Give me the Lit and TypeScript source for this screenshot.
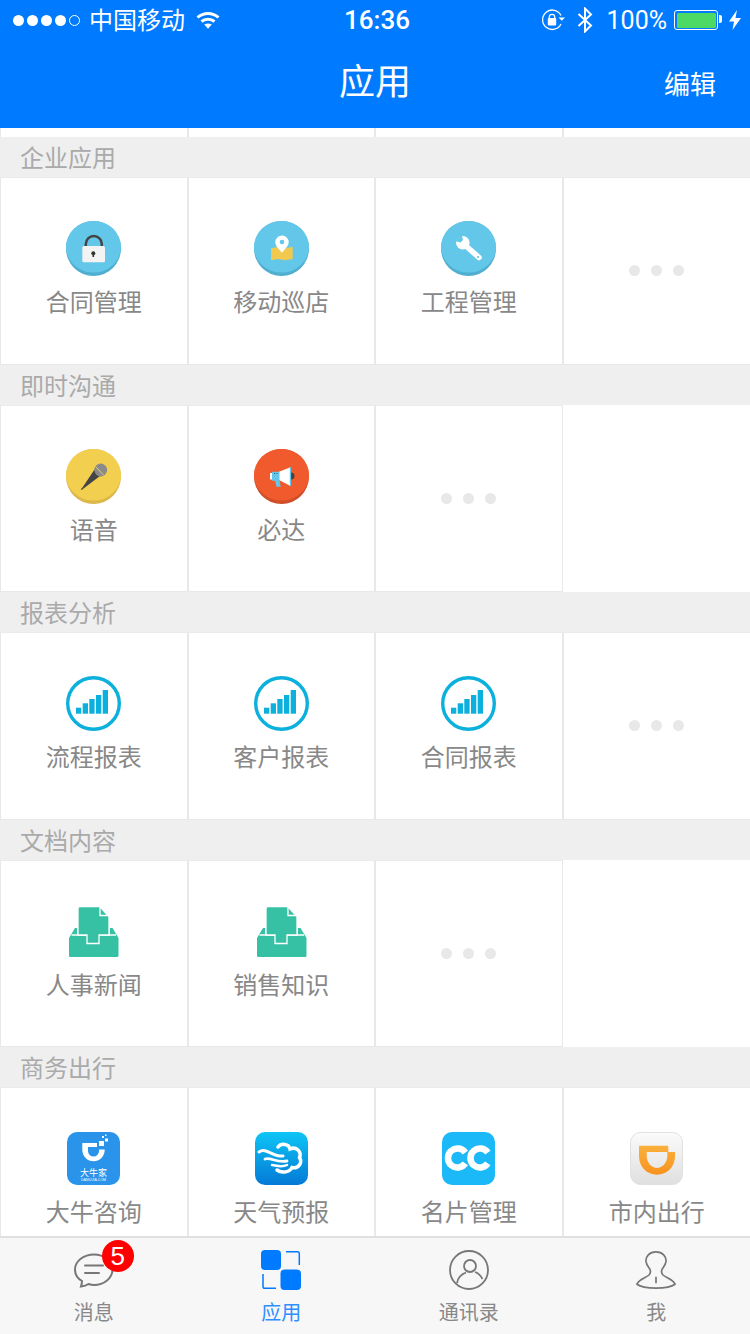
import { css, html, LitElement, svg } from "lit";
import { customElement } from "lit/decorators.js";

const disc = (top: string, bottom: string, inner: unknown) => html`
  <svg class="icon" viewBox="0 0 55 55">
    <circle cx="27.5" cy="27.5" r="27.5" fill=${bottom}></circle>
    <ellipse cx="27.5" cy="25.8" rx="27.5" ry="25.8" fill=${top}></ellipse>
    ${inner}
  </svg>
`;

const chart = html`
  <svg class="icon" viewBox="0 0 55 55">
    <circle cx="27.5" cy="27.5" r="25.8" fill="none" stroke="#0bb0dd" stroke-width="3.4"></circle>
    <g fill="#0bb0dd">
      <rect x="10" y="31.7" width="5.3" height="6"></rect>
      <rect x="16.7" y="27.3" width="5.3" height="10.4"></rect>
      <rect x="23.3" y="23" width="5.3" height="14.7"></rect>
      <rect x="30" y="19" width="5.3" height="18.7"></rect>
      <rect x="36.7" y="14" width="5.3" height="23.7"></rect>
    </g>
  </svg>
`;

const inbox = html`
  <svg class="icon" viewBox="0 0 55 55">
    <path d="M9 24H46.5L52.5 34V51.5Q52.5 53 51 53H4.5Q3 53 3 51.5V34Z" fill="#36c1a4"></path>
    <path d="M5.5 31H50" stroke="#fff" stroke-width="1.5"></path>
    <path d="M11 24H44V31H11Z" fill="#fff"></path>
    <path
      d="M14 2.7H34L43 12.5V31H33V39.5H21V31H12V4.7Q12 2.7 14 2.7Z"
      fill="#36c1a4"
      stroke="#fff"
      stroke-width="1.3"
    ></path>
    <path d="M34 3V11.5H42.5" fill="none" stroke="#fff" stroke-width="1.3"></path>
  </svg>
`;

const icons: Record<string, unknown> = {
  lock: disc(
    "#63c7ea",
    "#50afd0",
    svg`
      <path d="M19.8 26V23A8 8 0 0 1 35.8 23V26" fill="none" stroke="#444" stroke-width="2.5"></path>
      <rect x="16.3" y="25" width="22.7" height="16.3" rx="1.5" fill="#f3f3f3"></rect>
      <circle cx="27.3" cy="32.3" r="2" fill="#333"></circle>
      <rect x="26.5" y="32.5" width="1.6" height="3.5" fill="#333"></rect>
    `
  ),
  map: disc(
    "#63c7ea",
    "#50afd0",
    svg`
      <path d="M17 27.5L24 25.7L31 27.5L38.7 25.7V38L31 39.3L24 38L17 39.3Z" fill="#f0c94e"></path>
      <path d="M28 31.7C24.5 27.5 21.3 24.8 21.3 21.3A6.7 6.7 0 0 1 34.7 21.3C34.7 24.8 31.5 27.5 28 31.7Z" fill="#fff"></path>
      <circle cx="28" cy="21" r="2.3" fill="#63c7ea"></circle>
    `
  ),
  wrench: disc(
    "#63c7ea",
    "#50afd0",
    svg`
      <path d="M25 25L38 36.5" stroke="#fff" stroke-width="5.5" stroke-linecap="round"></path>
      <circle cx="21.8" cy="21.8" r="6.8" fill="#fff"></circle>
      <path d="M14 20L19.5 21.5L22 19L20.5 13Z" fill="#63c7ea"></path>
      <circle cx="37" cy="36" r="1.1" fill="#63c7ea"></circle>
    `
  ),
  mic: disc(
    "#f2cf4e",
    "#dcb84a",
    svg`
      <path d="M28.5 20.5L34 27L17.5 39.5L15.7 41L14.8 40.2L16.5 38.5Z" fill="#444"></path>
      <circle cx="34.7" cy="21" r="6.4" fill="#8a8a8a"></circle>
      <path d="M29.5 17.5L37.5 26" stroke="#e7cf6a" stroke-width="1"></path>
    `
  ),
  horn: disc(
    "#f15a2c",
    "#d04e2a",
    svg`
      <circle cx="37" cy="27" r="3.5" fill="#444"></circle>
      <path d="M25 22.7L36.5 18.3V37L25 31Z" fill="#fff"></path>
      <rect x="35.8" y="18" width="1.3" height="19" fill="#63c7ea"></rect>
      <rect x="16" y="24" width="3" height="6.5" fill="#fff"></rect>
      <path d="M18 22.7H25.5V31.5L26.7 37.7H22.5L21 31.7H18Z" fill="#63c7ea"></path>
      <circle cx="20.5" cy="24.5" r=".5" fill="#333"></circle>
      <circle cx="23" cy="24.5" r=".5" fill="#333"></circle>
    `
  ),
  chart,
  inbox,
  daniu: html`
    <svg class="icon square" viewBox="0 0 53 53">
      <rect width="53" height="53" rx="10" fill="#2a93ea"></rect>
      <path
        d="M15.3 11H30V15H21V19A5.5 5.5 0 0 0 32 19V17.5H37.7V18A11.2 11.2 0 0 1 15.3 18Z"
        fill="#fff"
      ></path>
      <g fill="#fff">
        <rect x="32" y="9" width="5" height="5"></rect>
        <rect x="38" y="6.5" width="3" height="3"></rect>
        <rect x="35" y="4" width="2" height="2"></rect>
        <rect x="38" y="2.5" width="1.5" height="1.5"></rect>
      </g>
      <text class="daniu-cn" x="26.5" y="44">大牛家</text>
      <text class="daniu-en" x="26.5" y="49">DANIUJIA.COM</text>
    </svg>
  `,
  weather: html`
    <svg class="icon square" viewBox="0 0 53 53">
      <defs>
        <linearGradient id="sky" x1="0" y1="0" x2="0" y2="1">
          <stop offset="0" stop-color="#0ec5f5"></stop>
          <stop offset="1" stop-color="#0479d6"></stop>
        </linearGradient>
      </defs>
      <rect width="53" height="53" rx="10" fill="url(#sky)"></rect>
      <g fill="none" stroke="#fff" stroke-linecap="round">
        <path
          d="M23 15C26 11 34 11.5 35 17C41 14 47 20 44.5 25.5C48 31 43 37 37 35.5C34 41 26 41 22 38"
          stroke-width="3.5"
        ></path>
        <path d="M4 20C11 15 18 25 28 24" stroke-width="3"></path>
        <path d="M10 27C16 25 21 31 32 29" stroke-width="2.8"></path>
        <path d="M17 33C20 33 26 36 32 33" stroke-width="2.5"></path>
      </g>
    </svg>
  `,
  cc: html`
    <svg class="icon square" viewBox="0 0 53 53">
      <rect width="53" height="53" rx="10" fill="#1cb9f8"></rect>
      <g fill="none" stroke="#fff" stroke-width="6.5">
        <path d="M23.3 20.6A9.5 9.5 0 1 0 23.3 31.4"></path>
        <path d="M45.8 20.6A9.5 9.5 0 1 0 45.8 31.4"></path>
      </g>
    </svg>
  `,
  didi: html`
    <svg class="icon square" viewBox="0 0 53 53">
      <defs>
        <linearGradient id="didi-bg" x1="0" y1="0" x2="0" y2="1">
          <stop offset="0" stop-color="#fbfbfb"></stop>
          <stop offset="1" stop-color="#dfdfdf"></stop>
        </linearGradient>
        <linearGradient id="didi-fg" x1="0" y1="0" x2="0" y2="1">
          <stop offset="0" stop-color="#fbb03b"></stop>
          <stop offset="1" stop-color="#f7931e"></stop>
        </linearGradient>
      </defs>
      <rect x=".5" y=".5" width="52" height="52" rx="10" fill="url(#didi-bg)" stroke="#e0e0e0"></rect>
      <path
        fill="url(#didi-fg)"
        fill-rule="evenodd"
        d="M9 13.7H38.3V20H45V24C45 35 37 42.7 27 42.7C17 42.7 9 35 9 24ZM16.7 20V24C16.7 31 22 36 27 36C32 36 37.3 31 37.3 24V20Z"
      ></path>
    </svg>
  `,
};

const tabIcons: Record<string, unknown> = {
  chat: html`
    <svg class="tab-icon" viewBox="0 0 40 40" fill="none" stroke="#777" stroke-width="2">
      <path d="M7 36.5C11 36 13 35 14.5 34C16 34.5 18 35 20 35C30 35 38.5 28 38.5 19.5C38.5 11 30 4.5 20 4.5C10 4.5 1 11 1 19.5C1 24.5 3.5 28.5 8 31C8 33 7.5 35 7 36.5Z"></path>
      <path d="M11 15.5H29M11 23H25" stroke-linecap="round"></path>
    </svg>
  `,
  apps: html`
    <svg class="tab-icon" viewBox="0 0 40 40">
      <rect x="0" y="0" width="20" height="20" rx="4" fill="#007aff"></rect>
      <rect x="19.5" y="19.5" width="20.5" height="20.5" rx="4" fill="#007aff"></rect>
      <path d="M25 1.7H36.5Q38.3 1.7 38.3 3.5V15" fill="none" stroke="#007aff" stroke-width="1.5"></path>
      <path d="M2 24V36.5Q2 38.3 3.8 38.3H15" fill="none" stroke="#007aff" stroke-width="1.5"></path>
    </svg>
  `,
  contacts: html`
    <svg class="tab-icon" viewBox="0 0 40 40" fill="none" stroke="#777" stroke-width="1.8">
      <circle cx="20" cy="20" r="19"></circle>
      <circle cx="21" cy="16" r="6"></circle>
      <path d="M8 33C9 27 13 24 17 22.5M26 22C29 23 32 26 33.5 29"></path>
    </svg>
  `,
  me: html`
    <svg class="tab-icon" viewBox="0 0 42 40" fill="none" stroke="#777" stroke-width="1.8">
      <path d="M21 1C14 1 10 6 10.5 11C11 15 13 17 14.5 19C15.5 21 15.5 23 14 25C11 28 2 30 1 35C5 38 13 39 21 39C29 39 37 38 41 35C40 30 31 28 28 25C26.5 23 26.5 21 27.5 19C29 17 31 15 31.5 11C32 6 28 1 21 1Z"></path>
      <path d="M21 27V34"></path>
    </svg>
  `,
};

interface App {
  name: string;
  icon: string;
}

interface Section {
  title: string;
  apps: App[];
}

const sections: Section[] = [
  {
    title: "企业应用",
    apps: [
      { name: "合同管理", icon: "lock" },
      { name: "移动巡店", icon: "map" },
      { name: "工程管理", icon: "wrench" },
    ],
  },
  {
    title: "即时沟通",
    apps: [
      { name: "语音", icon: "mic" },
      { name: "必达", icon: "horn" },
    ],
  },
  {
    title: "报表分析",
    apps: [
      { name: "流程报表", icon: "chart" },
      { name: "客户报表", icon: "chart" },
      { name: "合同报表", icon: "chart" },
    ],
  },
  {
    title: "文档内容",
    apps: [
      { name: "人事新闻", icon: "inbox" },
      { name: "销售知识", icon: "inbox" },
    ],
  },
  {
    title: "商务出行",
    apps: [
      { name: "大牛咨询", icon: "daniu" },
      { name: "天气预报", icon: "weather" },
      { name: "名片管理", icon: "cc" },
      { name: "市内出行", icon: "didi" },
    ],
  },
];

const tabs = [
  { name: "消息", icon: "chat", badge: "5" },
  { name: "应用", icon: "apps", active: true },
  { name: "通讯录", icon: "contacts" },
  { name: "我", icon: "me" },
];

@customElement("app-root")
class AppRoot extends LitElement {
  renderCells(apps: App[]) {
    const cells = apps.map(
      (app) => html`
        <div class="cell">
          ${icons[app.icon]}
          <span class="name">${app.name}</span>
        </div>
      `
    );
    if (apps.length < 4) {
      cells.push(html`
        <div class="cell more">
          <i></i><i></i><i></i>
        </div>
      `);
    }
    if (apps.length < 3) {
      cells.push(html`<div class="blank"></div>`);
    }
    return cells;
  }

  render() {
    return html`
      <header>
        <div class="status">
          <div class="carrier">
            <span class="dots"><i></i><i></i><i></i><i></i><i class="off"></i></span>
            <span class="carrier-name">中国移动</span>
            <svg class="wifi" viewBox="0 0 24 18" fill="none" stroke="#fff" stroke-width="3">
              <path d="M1.5 6.5C7.5 1 16.5 1 22.5 6.5"></path>
              <path d="M5.5 10.5C9 7.5 15 7.5 18.5 10.5"></path>
              <path d="M12 17.8L8.2 13.5C10.5 12.3 13.5 12.3 15.8 13.5Z" fill="#fff" stroke="none"></path>
            </svg>
          </div>
          <div class="time">16:36</div>
          <div class="indicators">
            <svg class="rotation" viewBox="0 0 24 22">
              <path d="M20 6.5A9.7 9.7 0 1 0 20 15" fill="none" stroke="#fff" stroke-width="1.3"></path>
              <path d="M17.5 8.5H24L20.8 11.8Z" fill="#fff"></path>
              <rect x="6.8" y="9" width="8.4" height="7.5" rx="1" fill="#fff"></rect>
              <path d="M8.3 10V8A2.7 2.7 0 0 1 13.7 8V10" fill="none" stroke="#fff" stroke-width="1.3"></path>
            </svg>
            <svg class="bluetooth" viewBox="0 0 16 26" fill="none" stroke="#fff" stroke-width="2">
              <path d="M1.5 7L14 18.5L8 24.5V1.5L14 7.5L1.5 19"></path>
            </svg>
            <span class="percent">100%</span>
            <span class="battery"><span></span></span>
            <svg class="bolt" viewBox="0 0 12 20"><path d="M8 0L0 11.5H5L3.5 20L12 8H6.5Z" fill="#fff"></path></svg>
          </div>
        </div>
        <nav>
          <span></span>
          <h1>应用</h1>
          <a>编辑</a>
        </nav>
      </header>
      <main>
        <div class="stub"><b></b><b></b><b></b><b></b></div>
        ${sections.map(
          (section) => html`
            <h2>${section.title}</h2>
            <div class="grid">${this.renderCells(section.apps)}</div>
          `
        )}
      </main>
      <footer>
        ${tabs.map(
          (tab) => html`
            <div class="tab ${tab.active ? "active" : ""}">
              <div class="tab-art">
                ${tabIcons[tab.icon]}
                ${tab.badge ? html`<span class="badge">${tab.badge}</span>` : ""}
              </div>
              <span>${tab.name}</span>
            </div>
          `
        )}
      </footer>
    `;
  }

  static styles = css`
    :host {
      display: flex;
      flex-direction: column;
      width: 750px;
      height: 1334px;
      overflow: hidden;
      background: #fff;
      font-family: "Noto Sans CJK SC", "Liberation Sans", sans-serif;
    }

    header {
      flex: none;
      height: 128px;
      background: #007aff;
      color: #fff;
    }

    .status {
      display: grid;
      grid-template-columns: 1fr auto 1fr;
      align-items: center;
      height: 40px;
      padding: 0 9px 0 13px;
    }
    .carrier,
    .indicators {
      display: flex;
      align-items: center;
      font-size: 24px;
    }
    .indicators {
      justify-content: flex-end;
    }
    .dots {
      display: flex;
      gap: 3px;
      margin-right: 9px;
    }
    .dots i {
      width: 11px;
      height: 11px;
      border-radius: 50%;
      background: #fff;
      box-sizing: border-box;
    }
    .dots i.off {
      background: none;
      border: 1px solid #fff;
    }
    .carrier-name {
      margin-bottom: 4px;
    }
    .wifi {
      width: 24px;
      height: 18px;
      margin-left: 11px;
    }
    .time {
      font: 500 26px Roboto, sans-serif;
    }
    .rotation {
      width: 24px;
      height: 22px;
    }
    .bluetooth {
      width: 16px;
      height: 26px;
      margin-left: 12px;
    }
    .percent {
      font: 25px Roboto, sans-serif;
      margin-left: 14px;
    }
    .battery {
      position: relative;
      box-sizing: border-box;
      width: 44px;
      height: 20px;
      margin: 0 11px 0 7px;
      padding: 1.5px;
      border: 1px solid #fff;
      border-radius: 3px;
    }
    .battery span {
      display: block;
      height: 100%;
      background: #4cd964;
      border-radius: 1.5px;
    }
    .battery::after {
      content: "";
      position: absolute;
      left: 44px;
      top: 4px;
      width: 3px;
      height: 8px;
      background: #fff;
      border-radius: 0 2px 2px 0;
    }
    .bolt {
      width: 12px;
      height: 20px;
    }

    nav {
      display: grid;
      grid-template-columns: 1fr auto 1fr;
      align-items: center;
      height: 84px;
      padding: 0 34px;
    }
    h1 {
      margin: 0 0 6px;
      font-size: 36px;
      font-weight: 400;
    }
    nav a {
      justify-self: end;
      font-size: 26px;
    }

    main {
      flex: 1;
      min-height: 0;
      overflow: hidden;
    }

    .stub {
      display: grid;
      grid-template-columns: repeat(4, 1fr);
      height: 9px;
    }
    .stub b {
      border-left: 1px solid #e8e8e8;
      border-right: 1px solid #e8e8e8;
    }
    .stub b:last-child {
      border-right: 0;
    }

    h2 {
      box-sizing: border-box;
      height: 40px;
      margin: 0;
      padding-left: 20px;
      background: #efefef;
      color: #aaa;
      font-size: 24px;
      font-weight: 400;
      line-height: 40px;
    }

    .grid {
      display: grid;
      grid-template-columns: repeat(4, 1fr);
      height: 187.5px;
    }
    .cell {
      display: flex;
      flex-direction: column;
      align-items: center;
      box-sizing: border-box;
      padding-top: 43px;
      border: 1px solid #e8e8e8;
      border-top-color: #ebebeb;
      overflow: hidden;
    }
    .cell:nth-child(4n) {
      border-right: 0;
    }
    .cell.more {
      flex-direction: row;
      justify-content: center;
      gap: 11px;
      padding-top: 87px;
      align-items: flex-start;
    }
    .cell.more i {
      width: 11px;
      height: 11px;
      border-radius: 50%;
      background: #e8e8e8;
    }

    .icon {
      width: 55px;
      height: 55px;
      flex: none;
    }
    .icon.square {
      width: 53px;
      height: 53px;
      margin: 1px;
    }
    .name {
      margin-top: 7px;
      color: #888;
      font-size: 24px;
      line-height: 36px;
    }
    .daniu-cn {
      fill: #fff;
      font-size: 9px;
      text-anchor: middle;
    }
    .daniu-en {
      fill: #fff;
      font: 3.5px "Liberation Sans", sans-serif;
      text-anchor: middle;
    }

    footer {
      flex: none;
      display: grid;
      grid-template-columns: repeat(4, 1fr);
      box-sizing: border-box;
      height: 98px;
      padding-top: 12px;
      border-top: 2px solid #e0e0e0;
      background: #f7f7f7;
    }
    .tab {
      display: flex;
      flex-direction: column;
      align-items: center;
      color: #888;
      font-size: 20px;
      line-height: 30px;
    }
    .tab.active {
      color: #2f8fff;
    }
    .tab-art {
      position: relative;
      height: 40px;
      margin-bottom: 7px;
    }
    .tab-icon {
      display: block;
      width: 40px;
      height: 40px;
    }
    .badge {
      position: absolute;
      left: 28px;
      top: -10px;
      width: 32px;
      height: 32px;
      border-radius: 50%;
      background: #fe0000;
      color: #fff;
      font: 26px/32px "Liberation Sans", sans-serif;
      text-align: center;
    }
  `;
}
